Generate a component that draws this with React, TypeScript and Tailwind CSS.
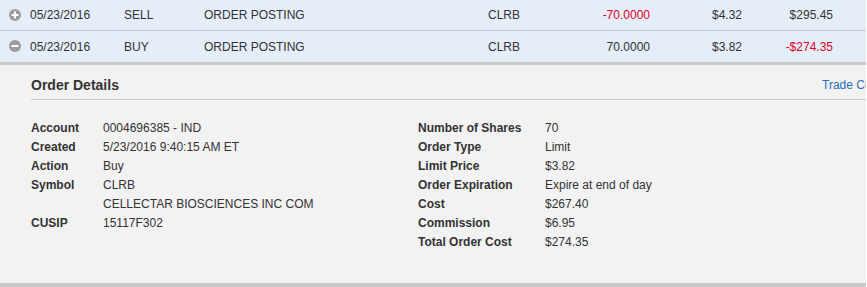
import React from "react";

type Row = {
  open: boolean;
  date: string;
  type: string;
  desc: string;
  symbol: string;
  qty: string;
  price: string;
  amount: string;
  qtyNeg?: boolean;
  amountNeg?: boolean;
};

const rows: Row[] = [
  {
    open: false,
    date: "05/23/2016",
    type: "SELL",
    desc: "ORDER POSTING",
    symbol: "CLRB",
    qty: "-70.0000",
    price: "$4.32",
    amount: "$295.45",
    qtyNeg: true,
  },
  {
    open: true,
    date: "05/23/2016",
    type: "BUY",
    desc: "ORDER POSTING",
    symbol: "CLRB",
    qty: "70.0000",
    price: "$3.82",
    amount: "-$274.35",
    amountNeg: true,
  },
];

const leftDetails: [string, string][] = [
  ["Account", "0004696385 - IND"],
  ["Created", "5/23/2016 9:40:15 AM ET"],
  ["Action", "Buy"],
  ["Symbol", "CLRB"],
  ["", "CELLECTAR BIOSCIENCES INC COM"],
  ["CUSIP", "15117F302"],
];

const rightDetails: [string, string][] = [
  ["Number of Shares", "70"],
  ["Order Type", "Limit"],
  ["Limit Price", "$3.82"],
  ["Order Expiration", "Expire at end of day"],
  ["Cost", "$267.40"],
  ["Commission", "$6.95"],
  ["Total Order Cost", "$274.35"],
];

function ToggleIcon({ open }: { open: boolean }) {
  return (
    <svg width="12" height="12" viewBox="0 0 12 12">
      <circle cx="6" cy="6" r="6" fill="#9d9d9d" />
      <rect x="2.5" y="5" width="7" height="2" fill="#fff" />
      {!open && <rect x="5" y="2.5" width="2" height="7" fill="#fff" />}
    </svg>
  );
}

function DetailList({ items, labelWidth }: { items: [string, string][]; labelWidth: string }) {
  return (
    <div className="flex flex-col">
      {items.map(([label, value], i) => (
        <div key={i} className="flex h-[19px] items-center leading-[19px]">
          <span className={`${labelWidth} shrink-0 font-bold text-[#333]`}>{label}</span>
          <span className="text-[#333]">{value}</span>
        </div>
      ))}
    </div>
  );
}

export default function App() {
  return (
    <div
      className="w-[866px] overflow-hidden bg-white text-[12px] text-[#333]"
      style={{ fontFamily: '"Liberation Sans", Arial, sans-serif' }}
    >
      {rows.map((row, i) => (
        <div
          key={i}
          className={`flex items-center whitespace-nowrap bg-[#e4edf8] ${
            i === 0 ? "h-[31px] border-b border-[#c5c8cc]" : "h-[34px] border-b-[3px] border-[#c9c9c9]"
          }`}
        >
          <div className="flex w-[30px] shrink-0 pl-[9px] pb-[1px]">
            <ToggleIcon open={row.open} />
          </div>
          <div className="w-[94px] shrink-0">{row.date}</div>
          <div className="w-[80px] shrink-0">{row.type}</div>
          <div className="w-[284px] shrink-0">{row.desc}</div>
          <div className="w-[100px] shrink-0">{row.symbol}</div>
          <div className={`w-[62px] shrink-0 text-right ${row.qtyNeg ? "text-[#e0001b]" : ""}`}>{row.qty}</div>
          <div className="w-[92px] shrink-0 text-right">{row.price}</div>
          <div className={`w-[91px] shrink-0 text-right ${row.amountNeg ? "text-[#e0001b]" : ""}`}>{row.amount}</div>
        </div>
      ))}

      <div className="border-b-4 border-[#c9c9c9] bg-[#f2f2f2] pl-[31px] pb-[31px]">
        <div className="flex items-center whitespace-nowrap border-b border-[#cccccc] pt-[8px] pb-[2px]">
          <div className="w-[791px] shrink-0 text-[14px] font-bold leading-[24px] text-[#333]">Order Details</div>
          <a className="text-[12px] text-[#2a6ebb]">Trade Confirmation</a>
        </div>

        <div className="mt-[19px] flex whitespace-nowrap">
          <div className="w-[387px] shrink-0">
            <DetailList items={leftDetails} labelWidth="w-[72px]" />
          </div>
          <div>
            <DetailList items={rightDetails} labelWidth="w-[127px]" />
          </div>
        </div>
      </div>
    </div>
  );
}
